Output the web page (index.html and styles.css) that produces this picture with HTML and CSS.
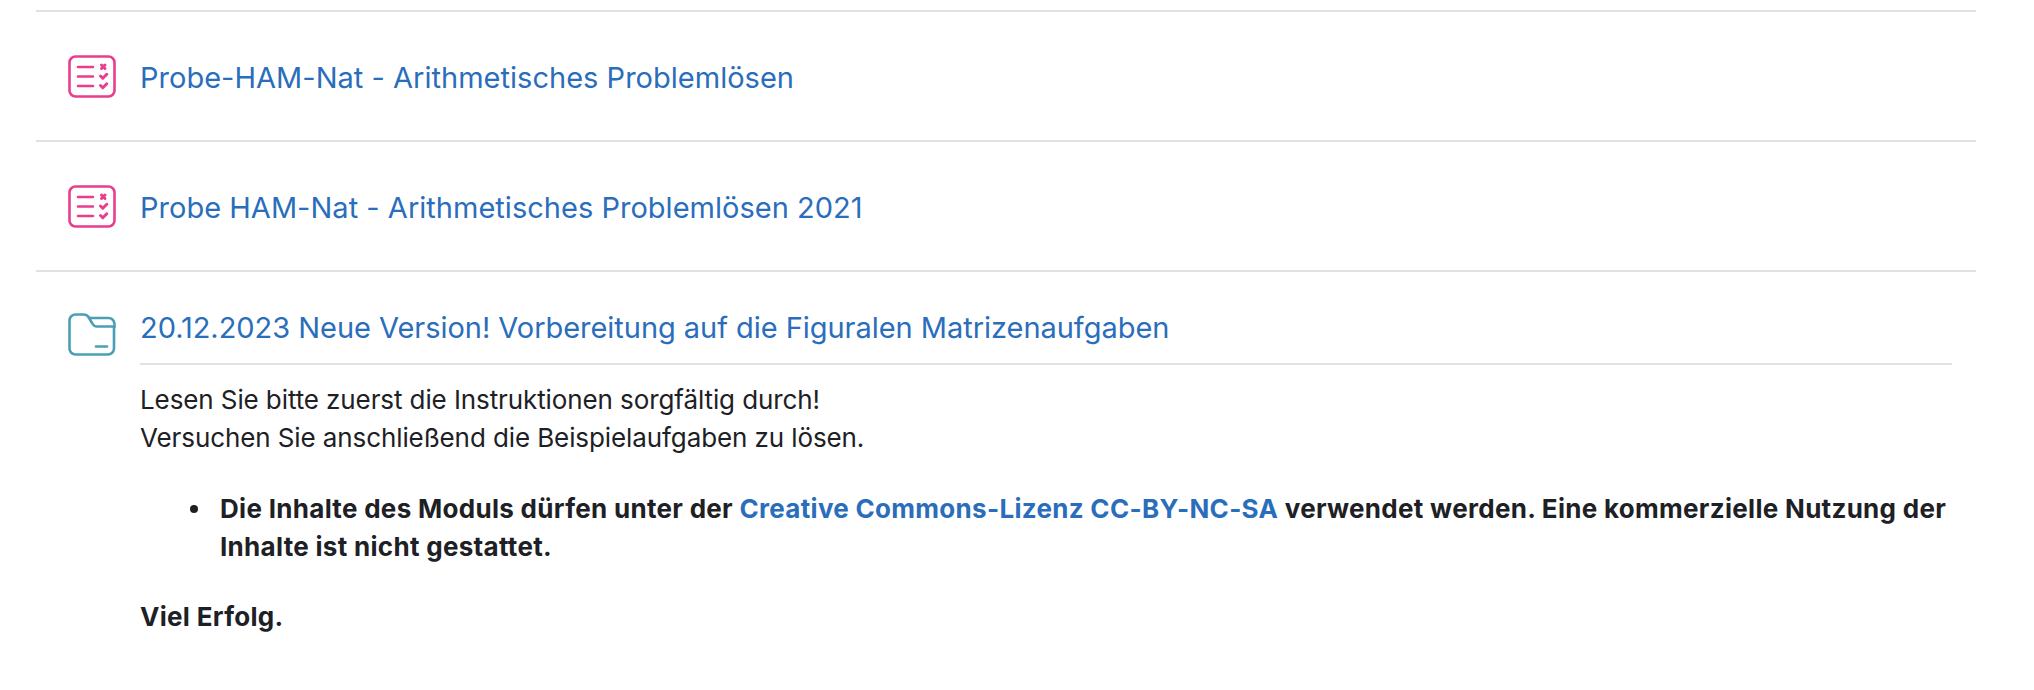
FILE: index.html
```html
<!DOCTYPE html>
<html lang="de">
<head>
    <meta charset="UTF-8">
    <title>Kurs</title>
    <link rel="stylesheet" href="styles.css">
</head>
<body>
  <ul class="modules">
    <li class="module">
      <div class="head">
        <svg class="icon" viewBox="0 0 48 43" fill="none" stroke="#e83e8c" stroke-width="2.6" stroke-linecap="round" stroke-linejoin="round">
          <rect x="1.500" y="1.500" width="45" height="40" rx="6"/>
          <path d="M10 12h15M10 21.500h15M10 31h15"/>
          <path d="M33.500 10l3.500 3.500M37 10l-3.500 3.500M32.500 21l2.300 2.300 4-4M32.500 30.500l2.300 2.300 4-4" stroke-width="3"/>
        </svg>
        <a class="title" href="#">Probe-HAM-Nat - Arithmetisches Problemlösen</a>
      </div>
    </li>
    <li class="module">
      <div class="head">
        <svg class="icon" viewBox="0 0 48 43" fill="none" stroke="#e83e8c" stroke-width="2.6" stroke-linecap="round" stroke-linejoin="round">
          <rect x="1.500" y="1.500" width="45" height="40" rx="6"/>
          <path d="M10 12h15M10 21.500h15M10 31h15"/>
          <path d="M33.500 10l3.500 3.500M37 10l-3.500 3.500M32.500 21l2.300 2.300 4-4M32.500 30.500l2.300 2.300 4-4" stroke-width="3"/>
        </svg>
        <a class="title" href="#">Probe HAM-Nat - Arithmetisches Problemlösen 2021</a>
      </div>
    </li>
    <li class="module folder">
      <div class="head">
        <svg class="icon" viewBox="0 0 48 43" fill="none" stroke="#4a9fb5" stroke-width="2.6" stroke-linecap="round" stroke-linejoin="round">
          <path d="M1.500 7.500a6 6 0 0 1 6-6h8c2.500 0 4 1 5 2.500l3.500 6c1 2 2.500 3.500 5 3.500h17v22a6 6 0 0 1-6 6h-32.500a6 6 0 0 1-6-6z"/>
          <path d="M21 5h19.500a6 6 0 0 1 6 6v3"/>
          <path d="M28 33.500h11"/>
        </svg>
        <a class="title" href="#">20.12.2023 Neue Version! Vorbereitung auf die Figuralen Matrizenaufgaben</a>
      </div>
      <div class="desc">
        <p>Lesen Sie bitte zuerst die Instruktionen sorgfältig durch!<br>Versuchen Sie anschließend die Beispielaufgaben zu lösen.</p>
        <ul class="notes">
          <li><b>Die Inhalte des Moduls dürfen unter der <a href="#">Creative Commons-Lizenz CC-BY-NC-SA</a> verwendet werden. Eine kommerzielle Nutzung der Inhalte ist nicht gestattet.</b></li>
        </ul>
        <p><b>Viel Erfolg.</b></p>
      </div>
    </li>
  </ul>
</body>
</html>
```
FILE: styles.css
```css
body {
  margin: 0;
  background: #fff;
  color: #1d2125;
  font-family: "Inter", "Liberation Sans", sans-serif;
  font-size: 26px;
  line-height: 38px;
  letter-spacing: -0.1px;
}
b {
  letter-spacing: 0.3px;
}
a {
  color: #2a6ebb;
  text-decoration: none;
}
.modules {
  list-style: none;
  margin: 0 58px 0 36px;
  padding: 10px 0 0;
}
.module {
  border-top: 2px solid #dee2e6;
  height: 128px;
}
.module .head {
  display: flex;
  align-items: flex-start;
  gap: 24px;
  padding: 43px 0 0 32px;
}
.icon {
  width: 48px;
  height: 43px;
  flex-shrink: 0;
}
.title {
  margin-top: 4px;
  font-size: 29px;
  letter-spacing: 0.02px;
}
.folder {
  height: auto;
}
.folder .head {
  padding-top: 37px;
}
.folder .icon {
  margin-top: 4px;
}
.folder .title {
  margin-top: 0;
  letter-spacing: -0.04px;
}
.desc {
  margin: 7px 24px 0 104px;
  padding-top: 16px;
  border-top: 2px solid #dee2e6;
}
.desc p {
  margin: 0 0 33px;
}
.notes {
  list-style: none;
  margin: 0 0 32px;
  padding-left: 80px;
}
.notes li {
  position: relative;
}
.notes li::before {
  content: "";
  position: absolute;
  left: -30px;
  top: 15px;
  width: 8px;
  height: 8px;
  border-radius: 50%;
  background: #1d2125;
}
```
